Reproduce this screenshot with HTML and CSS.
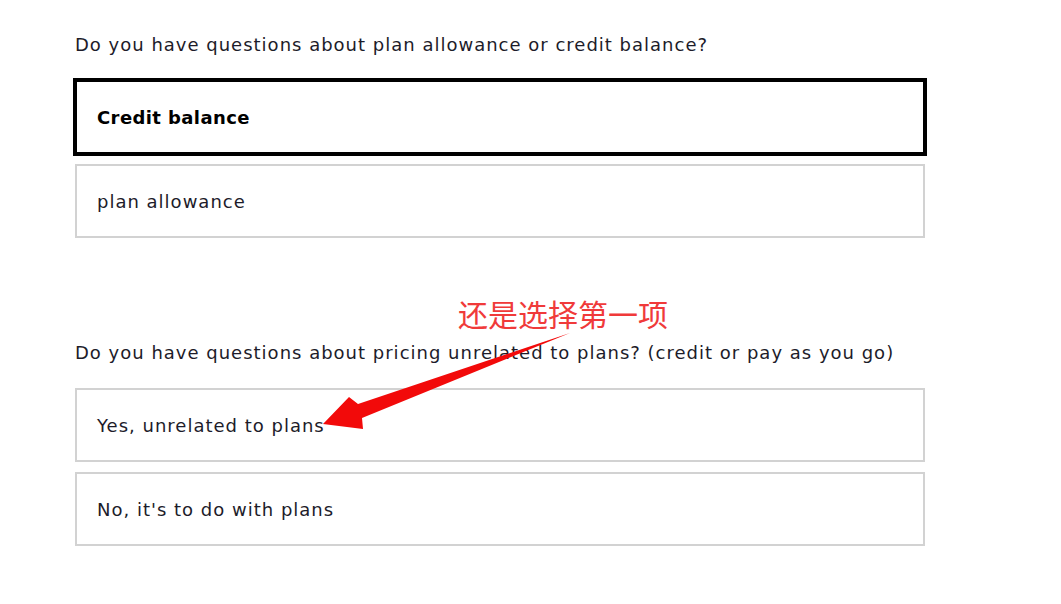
FILE: index.html
```html
<!DOCTYPE html>
<html lang="en">
<head>
    <meta charset="UTF-8">
    <meta name="viewport" content="width=device-width, initial-scale=1.0">
    <title>Pricing questions</title>
    <link rel="stylesheet" href="styles.css">
</head>
<body>
    <div class="page">
        <div class="question">
            <p class="question-text">Do you have questions about plan allowance or credit balance?</p>
            <div class="options">
                <div class="option selected">Credit balance</div>
                <div class="option">plan allowance</div>
            </div>
        </div>

        <div class="question second">
            <p class="question-text">Do you have questions about pricing unrelated to plans? (credit or pay as you go)</p>
            <div class="options">
                <div class="option">Yes, unrelated to plans</div>
                <div class="option">No, it's to do with plans</div>
            </div>
        </div>

        <!-- annotation drawn over the screenshot -->
        <div class="note">还是选择第一项</div>
        <svg class="arrow" width="1061" height="604" viewBox="0 0 1061 604">
            <polygon points="570,333 358,404 349,397 323,424 363,429 362,418" fill="#f20a0a"/>
        </svg>
    </div>
</body>
</html>
```

FILE: styles.css
```css
body { margin: 0; background: #fff; font-family: "DejaVu Sans", "Noto Sans", sans-serif; color: #1d1c2a; }
.page { position: relative; padding: 32px 0 0 75px; height: 572px; overflow: hidden; }
.question-text { margin: 0 0 22px; font-size: 18px; line-height: 26px; letter-spacing: 1px; }
.question.second { margin-top: 102px; }
.options { display: flex; flex-direction: column; gap: 10px; width: 850px; }
.option { box-sizing: border-box; height: 74px; border: 2px solid #d2d2d2; padding: 0 20px; display: flex; align-items: center; font-size: 18px; letter-spacing: 1px; }
.option.selected { height: 78px; margin: -2px -2px -2px; border: 4px solid #000; font-weight: bold; color: #000; letter-spacing: 0.4px; }
.note { position: absolute; left: 458px; top: 295px; font-family: "Noto Sans CJK SC", sans-serif; font-size: 30px; line-height: 36px; color: #f03a3a; }
.arrow { position: absolute; left: 0; top: 0; }
```
